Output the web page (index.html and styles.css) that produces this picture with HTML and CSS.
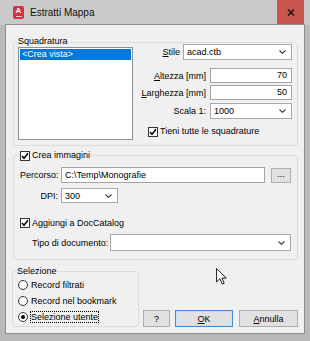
FILE: index.html
```html
<!DOCTYPE html>
<html lang="it">
<head>
    <meta charset="UTF-8">
    <title>Estratti Mappa</title>
    <link rel="stylesheet" href="styles.css">
</head>
<body>
    <div class="window">
        <div class="titlebar">
            <span class="app-icon"><span class="app-letter">A</span><span class="app-bar"></span></span>
            <span class="title">Estratti Mappa</span>
            <span class="close">
                <svg width="8" height="7" viewBox="0 0 8 7"><path d="M1 0.5 L7 6.5 M7 0.5 L1 6.5" stroke="#1e1e1e" stroke-width="1.6"/></svg>
            </span>
        </div>

        <div class="client">
            <div class="group squadratura">
                <span class="legend">Squadratura</span>
                <div class="listbox">
                    <div class="list-item selected">&lt;Crea vista&gt;</div>
                </div>
                <div class="props">
                    <div class="row row-stile">
                        <span class="lbl"><u>S</u>tile</span>
                        <div class="combo combo-stile">acad.ctb<svg class="chev" width="7" height="4" viewBox="0 0 7 4"><path d="M0.5 0.5 L3.5 3.3 L6.5 0.5" fill="none" stroke="#333" stroke-width="1.1"/></svg></div>
                    </div>
                    <div class="row row-alt">
                        <span class="lbl"><u>A</u>ltezza [mm]</span>
                        <div class="field num">70</div>
                    </div>
                    <div class="row row-larg">
                        <span class="lbl"><u>L</u>arghezza [mm]</span>
                        <div class="field num">50</div>
                    </div>
                    <div class="row row-scala">
                        <span class="lbl">Scala 1:</span>
                        <div class="combo combo-scala">1000<svg class="chev" width="7" height="4" viewBox="0 0 7 4"><path d="M0.5 0.5 L3.5 3.3 L6.5 0.5" fill="none" stroke="#333" stroke-width="1.1"/></svg></div>
                    </div>
                    <div class="check-row tieni">
                        <span class="checkbox"><svg width="8" height="8" viewBox="0 0 8 8"><path d="M1 4 L3 6.3 L7 1.2" fill="none" stroke="#000" stroke-width="1.5"/></svg></span>
                        <span>Tieni tutte le squadrature</span>
                    </div>
                </div>
            </div>

            <div class="group immagini">
                <div class="legend check-row">
                    <span class="checkbox"><svg width="8" height="8" viewBox="0 0 8 8"><path d="M1 4 L3 6.3 L7 1.2" fill="none" stroke="#000" stroke-width="1.5"/></svg></span>
                    <span>Crea immagini</span>
                </div>
                <div class="row row-percorso">
                    <span class="lbl-left">Percorso:</span>
                    <div class="field path">C:\Temp\Monografie</div>
                    <span class="btn-dots">...</span>
                </div>
                <div class="row row-dpi">
                    <span class="lbl-left right">DPI:</span>
                    <div class="combo combo-dpi">300<svg class="chev" width="7" height="4" viewBox="0 0 7 4"><path d="M0.5 0.5 L3.5 3.3 L6.5 0.5" fill="none" stroke="#333" stroke-width="1.1"/></svg></div>
                </div>
                <div class="check-row doccatalog">
                    <span class="checkbox"><svg width="8" height="8" viewBox="0 0 8 8"><path d="M1 4 L3 6.3 L7 1.2" fill="none" stroke="#000" stroke-width="1.5"/></svg></span>
                    <span>Aggiungi a DocCatalog</span>
                </div>
                <div class="row row-tipo">
                    <span class="lbl-tipo">Tipo di documento:</span>
                    <div class="combo combo-tipo"><svg class="chev" width="7" height="4" viewBox="0 0 7 4"><path d="M0.5 0.5 L3.5 3.3 L6.5 0.5" fill="none" stroke="#333" stroke-width="1.1"/></svg></div>
                </div>
            </div>

            <div class="bottom">
                <div class="group selezione">
                    <span class="legend">Selezione</span>
                    <div class="radio-row"><span class="radio"></span><span>Record filtrati</span></div>
                    <div class="radio-row"><span class="radio"></span><span>Record nel bookmark</span></div>
                    <div class="radio-row"><span class="radio on"></span><span class="focus">Selezione utente</span></div>
                </div>
                <div class="buttons">
                    <span class="btn btn-help">?</span>
                    <span class="btn btn-ok"><u>O</u>K</span>
                    <span class="btn btn-cancel"><u>A</u>nnulla</span>
                </div>
            </div>
        </div>

        <svg class="cursor" width="11" height="17" viewBox="0 0 12 19"><path d="M0.5 0.5 V15.5 L4.2 12 L6.8 18 L9 17 L6.5 11.3 H11.3 Z" fill="#fff" stroke="#000" stroke-width="1"/></svg>
    </div>
</body>
</html>
```

FILE: styles.css
```css
* {
    margin: 0;
    padding: 0;
    box-sizing: border-box;
}

body {
    width: 310px;
    height: 341px;
    overflow: hidden;
    font-family: "Liberation Sans", Arial, sans-serif;
    font-size: 9px;
    color: #000;
}

u {
    text-decoration: underline;
    text-underline-offset: 1px;
}

.window {
    position: relative;
    width: 310px;
    height: 341px;
    background: #b9b9b9;
    display: flex;
    flex-direction: column;
}

/* title bar */
.titlebar {
    height: 25px;
    background: #cbcaca;
    display: flex;
    align-items: center;
    padding-left: 13px;
}

.app-icon {
    width: 11px;
    height: 13px;
    background: #d8313f;
    border-radius: 2px;
    display: flex;
    flex-direction: column;
    align-items: center;
}

.app-letter {
    color: #fff;
    font-weight: bold;
    font-size: 8px;
    line-height: 9px;
}

.app-bar {
    width: 6px;
    height: 1px;
    margin-top: 1px;
    background: #f5c7cb;
}

.title {
    margin-left: 6px;
    font-size: 10px;
    color: #111;
}

.close {
    margin-left: auto;
    margin-right: 6px;
    align-self: flex-start;
    width: 27px;
    height: 24px;
    background: #c8564e;
    display: flex;
    align-items: center;
    justify-content: center;
}

/* client area */
.client {
    flex: 1;
    margin: 0 6px 8px;
    background: #f0f0f0;
    box-shadow: 0 0 0 1px #8f8f8f;
    padding: 17px 6px 6px 7px;
    display: flex;
    flex-direction: column;
}

.group {
    position: relative;
    border: 1px solid #dcdcdc;
    border-radius: 3px;
}

.legend {
    position: absolute;
    top: -7px;
    left: 3px;
    padding: 0 1px;
    background: #f0f0f0;
    line-height: 11px;
}

/* Squadratura */
.squadratura {
    height: 104px;
    display: flex;
    padding: 4px 5px 0 4px;
}

.listbox {
    width: 115px;
    height: 93px;
    border: 1px solid #8a8f98;
    background: #fff;
    padding: 1px;
}

.list-item {
    height: 11px;
    line-height: 11px;
    padding-left: 2px;
}

.list-item.selected {
    background: #0078d7;
    color: #fff;
}

.props {
    flex: 1;
    margin-top: -3px;
    display: flex;
    flex-direction: column;
    align-items: flex-end;
}

.row {
    display: flex;
    align-items: center;
}

.lbl {
    margin-right: 4px;
}

.field {
    height: 15px;
    background: #fff;
    border: 1px solid #a5a5a5;
    line-height: 13px;
    padding: 0 3px;
}

.field.num {
    width: 82px;
    text-align: right;
    padding-right: 4px;
}

.combo {
    height: 16px;
    background: #fff;
    border: 1px solid #a9a9a9;
    display: flex;
    align-items: center;
    padding: 0 5px 0 3px;
}

.chev {
    margin-left: auto;
}

.row-stile {
    height: 16px;
    margin-bottom: 8px;
}

.row-stile .lbl {
    margin-right: 3px;
}

.combo-stile {
    width: 109px;
}

.row-alt {
    height: 15px;
    margin-bottom: 2px;
}

.row-larg {
    height: 15px;
    margin-bottom: 3px;
}

.row-scala {
    height: 16px;
    margin-bottom: 7px;
}

.combo-scala {
    width: 82px;
}

.check-row {
    display: flex;
    align-items: center;
    gap: 2px;
    line-height: 11px;
}

.checkbox {
    width: 10px;
    height: 10px;
    border: 1px solid #333;
    background: #fff;
    display: flex;
    align-items: center;
    justify-content: center;
}

.tieni {
    align-self: flex-start;
    margin-left: 15px;
}

/* Crea immagini */
.immagini {
    height: 105px;
    margin-top: 9px;
    padding: 11px 6px 0 6px;
}

.immagini .legend {
    left: 5px;
    top: -6px;
    padding: 0 1px;
}

.lbl-left {
    width: 41px;
}

.lbl-left.right {
    text-align: right;
    padding-right: 3px;
}

.row-percorso {
    height: 16px;
}

.field.path {
    width: 204px;
    height: 16px;
    line-height: 14px;
    padding-left: 3px;
}

.btn-dots {
    margin-left: 6px;
    width: 20px;
    height: 15px;
    border: 1px solid #adadad;
    background: #e1e1e1;
    text-align: center;
    line-height: 10px;
    font-size: 9px;
}

.row-dpi {
    height: 15px;
    margin-top: 5px;
}

.combo-dpi {
    width: 57px;
    height: 15px;
}

.doccatalog {
    margin-top: 15px;
    height: 10px;
}

.row-tipo {
    height: 17px;
    margin-top: 6px;
}

.lbl-tipo {
    width: 90px;
    padding-left: 12px;
}

.combo-tipo {
    width: 182px;
    height: 17px;
}

/* bottom */
.bottom {
    margin-top: 11px;
    display: flex;
    align-items: flex-end;
}

.selezione {
    width: 127px;
    height: 56px;
    margin-left: -1px;
    padding: 5px 0 0 5px;
}

.selezione .legend {
    left: 3px;
    top: -6px;
}

.radio-row {
    height: 16px;
    display: flex;
    align-items: center;
    gap: 3px;
}

.radio {
    width: 10px;
    height: 10px;
    border: 1px solid #333;
    border-radius: 50%;
    background: #fff;
    display: flex;
    align-items: center;
    justify-content: center;
}

.radio.on::after {
    content: "";
    width: 4px;
    height: 4px;
    border-radius: 50%;
    background: #000;
}

.focus {
    outline: 1px dotted #000;
    line-height: 10px;
}

.buttons {
    margin-left: auto;
    display: flex;
}

.btn {
    height: 17px;
    border: 1px solid #adadad;
    background: #e1e1e1;
    display: flex;
    align-items: center;
    justify-content: center;
}

.btn-help {
    width: 27px;
}

.btn-ok {
    width: 58px;
    margin-left: 5px;
    border-color: #3c8fd6;
    box-shadow: inset 0 0 0 1px #c9e0f4;
}

.btn-cancel {
    width: 59px;
    margin-left: 6px;
}

.cursor {
    position: absolute;
    left: 216px;
    top: 268px;
}
```
